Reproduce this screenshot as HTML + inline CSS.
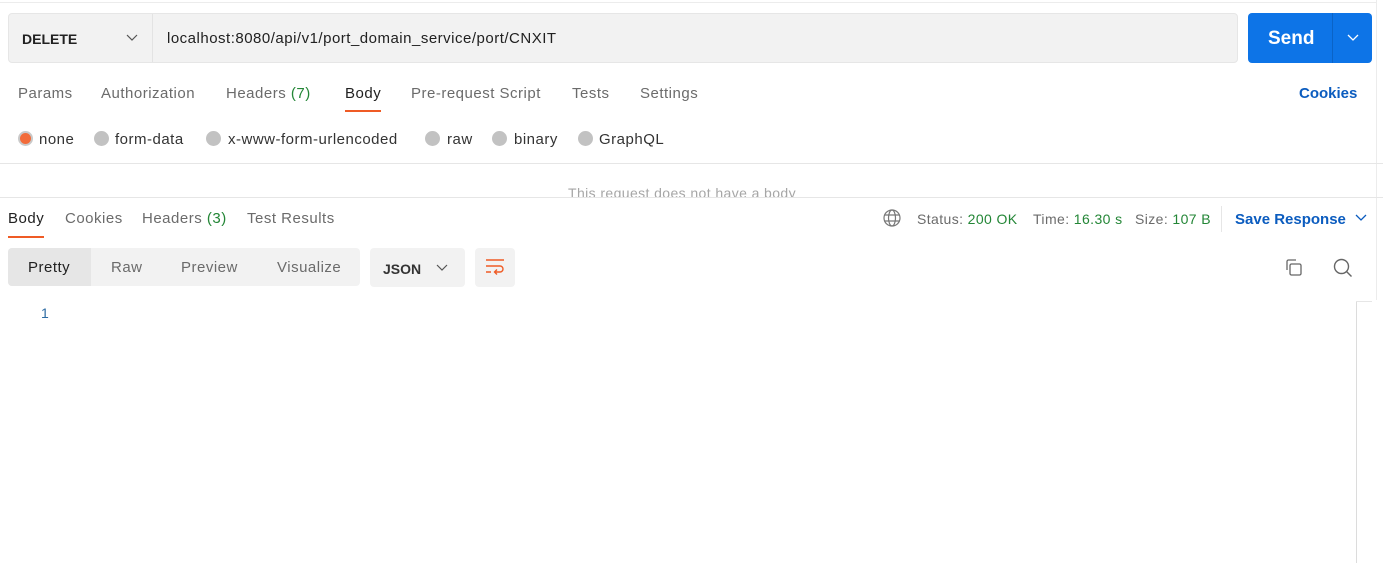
<!DOCTYPE html>
<html><head><style>
*{margin:0;padding:0;box-sizing:border-box}
body{width:1390px;height:563px;background:#fff;font-family:"Liberation Sans",sans-serif;color:#6b6b6b;position:relative;overflow:hidden;font-size:15px;letter-spacing:.5px}
.a{position:absolute;white-space:nowrap}
.b{letter-spacing:0}
.g{color:#238636}
.r{position:absolute;top:131px;width:15px;height:15px;border-radius:50%;background:#c2c2c2}
</style></head><body>
<div class="a" style="left:0;top:2px;width:1376px;height:1px;background:#ececec"></div>
<div class="a" style="left:1376px;top:0;width:1px;height:300px;background:#ececec"></div>
<div class="a" style="left:8px;top:13px;width:1230px;height:50px;background:#f2f2f2;border:1px solid #e6e6e6;border-radius:4px"></div>
<div class="a" style="left:152px;top:14px;width:1px;height:48px;background:#e3e3e3"></div>
<div class="a b" style="left:22px;top:31px;font-weight:bold;font-size:14px;color:#212121">DELETE</div>
<svg class="a" style="left:126px;top:34px" width="12" height="8"><path d="M1 1L6 6L11 1" fill="none" stroke="#555" stroke-width="1.2"/></svg>
<div class="a" style="left:167px;top:30px;color:#212121;font-size:15px">localhost:8080/api/v1/port_domain_service/port/CNXIT</div>
<div class="a" style="left:1248px;top:13px;width:124px;height:50px;background:#0d74e7;border-radius:4px"></div>
<div class="a" style="left:1332px;top:13px;width:1px;height:50px;background:#0a63c7"></div>
<div class="a b" style="left:1268px;top:28px;color:#fff;font-weight:bold;font-size:19px">Send</div>
<svg class="a" style="left:1347px;top:34px" width="12" height="8"><path d="M1 1L6 6L11 1" fill="none" stroke="#fff" stroke-width="1.3"/></svg>

<div class="a" style="left:18px;top:85px">Params</div>
<div class="a" style="left:101px;top:85px">Authorization</div>
<div class="a" style="left:226px;top:85px">Headers <span class="g">(7)</span></div>
<div class="a" style="left:345px;top:85px;color:#212121">Body</div>
<div class="a" style="left:345px;top:110px;width:36px;height:2px;background:#ef5b25"></div>
<div class="a" style="left:411px;top:85px">Pre-request Script</div>
<div class="a" style="left:572px;top:85px">Tests</div>
<div class="a" style="left:640px;top:85px">Settings</div>
<div class="a b" style="left:1299px;top:85px;color:#0b5cbf;font-weight:bold">Cookies</div>

<div class="r" style="left:18px;background:#f26b3a;border:2px solid #c9c9c9"></div>
<div class="a" style="left:39px;top:131px;color:#333">none</div>
<div class="r" style="left:94px"></div><div class="a" style="left:115px;top:131px;color:#333">form-data</div>
<div class="r" style="left:206px"></div><div class="a" style="left:228px;top:131px;color:#333">x-www-form-urlencoded</div>
<div class="r" style="left:425px"></div><div class="a" style="left:447px;top:131px;color:#333">raw</div>
<div class="r" style="left:492px"></div><div class="a" style="left:514px;top:131px;color:#333">binary</div>
<div class="r" style="left:578px"></div><div class="a" style="left:599px;top:131px;color:#333">GraphQL</div>

<div class="a" style="left:0;top:163px;width:1383px;height:1px;background:#e6e6e6"></div>
<div class="a" style="left:0;top:164px;width:1383px;height:33px;overflow:hidden"><div class="a" style="left:568px;top:21px;color:#a6a6a6;font-size:14px;letter-spacing:.4px">This request does not have a body</div></div>
<div class="a" style="left:0;top:197px;width:1383px;height:1px;background:#e6e6e6"></div>

<div class="a" style="left:8px;top:210px;color:#212121">Body</div>
<div class="a" style="left:8px;top:236px;width:36px;height:2px;background:#ef5b25"></div>
<div class="a" style="left:65px;top:210px">Cookies</div>
<div class="a" style="left:142px;top:210px">Headers <span class="g">(3)</span></div>
<div class="a" style="left:247px;top:210px">Test Results</div>

<svg class="a" style="left:883px;top:209px" width="18" height="18" fill="none" stroke="#777" stroke-width="1.2"><circle cx="9" cy="9" r="8"/><ellipse cx="9" cy="9" rx="3.5" ry="8"/><path d="M1.5 6H16.5M1.5 12H16.5"/></svg>
<div class="a" style="left:917px;top:211px;font-size:14px;letter-spacing:.4px">Status: <span class="g">200 OK</span></div>
<div class="a" style="left:1033px;top:211px;font-size:14px;letter-spacing:.4px">Time: <span class="g">16.30 s</span></div>
<div class="a" style="left:1135px;top:211px;font-size:14px;letter-spacing:.4px">Size: <span class="g">107 B</span></div>
<div class="a" style="left:1221px;top:206px;width:1px;height:26px;background:#e6e6e6"></div>
<div class="a b" style="left:1235px;top:211px;color:#0b5cbf;font-weight:bold">Save Response</div>
<svg class="a" style="left:1355px;top:214px" width="12" height="8"><path d="M1 1L6 6L11 1" fill="none" stroke="#0b5cbf" stroke-width="1.3"/></svg>

<div class="a" style="left:8px;top:248px;width:352px;height:38px;background:#f2f2f2;border-radius:4px"></div>
<div class="a" style="left:8px;top:248px;width:83px;height:38px;background:#e6e6e6;border-radius:4px 0 0 4px"></div>
<div class="a" style="left:28px;top:259px;color:#212121">Pretty</div>
<div class="a" style="left:111px;top:259px">Raw</div>
<div class="a" style="left:181px;top:259px">Preview</div>
<div class="a" style="left:277px;top:259px">Visualize</div>
<div class="a" style="left:370px;top:248px;width:95px;height:39px;background:#f2f2f2;border-radius:4px"></div>
<div class="a b" style="left:383px;top:261px;font-weight:bold;font-size:14px;color:#333">JSON</div>
<svg class="a" style="left:436px;top:264px" width="12" height="8"><path d="M1 1L6 6L11 1" fill="none" stroke="#555" stroke-width="1.2"/></svg>
<div class="a" style="left:475px;top:248px;width:40px;height:39px;background:#f2f2f2;border-radius:4px"></div>
<svg class="a" style="left:485px;top:258px" width="20" height="18" fill="none" stroke="#ef5b25" stroke-width="1.4"><path d="M1 2H19M1 8H15a3 3 0 0 1 0 6H10M12 11.5L9.5 14L12 16.5M1 14H6"/></svg>

<svg class="a" style="left:1284px;top:258px" width="19" height="19" fill="none" stroke="#666" stroke-width="1.3"><path d="M3 12V3.5A1.5 1.5 0 0 1 4.5 2H12"/><rect x="6" y="6" width="11" height="11" rx="1.5"/></svg>
<svg class="a" style="left:1333px;top:258px" width="20" height="20" fill="none" stroke="#666" stroke-width="1.4"><circle cx="8.5" cy="8.5" r="7"/><path d="M13.5 13.5L18.5 18.5"/></svg>

<div class="a" style="left:41px;top:305px;color:#2d6ba3;font-size:14px">1</div>
<div class="a" style="left:1356px;top:301px;width:1px;height:262px;background:#dcdcdc"></div>
<div class="a" style="left:1356px;top:301px;width:16px;height:1px;background:#e6e6e6"></div>
</body></html>
